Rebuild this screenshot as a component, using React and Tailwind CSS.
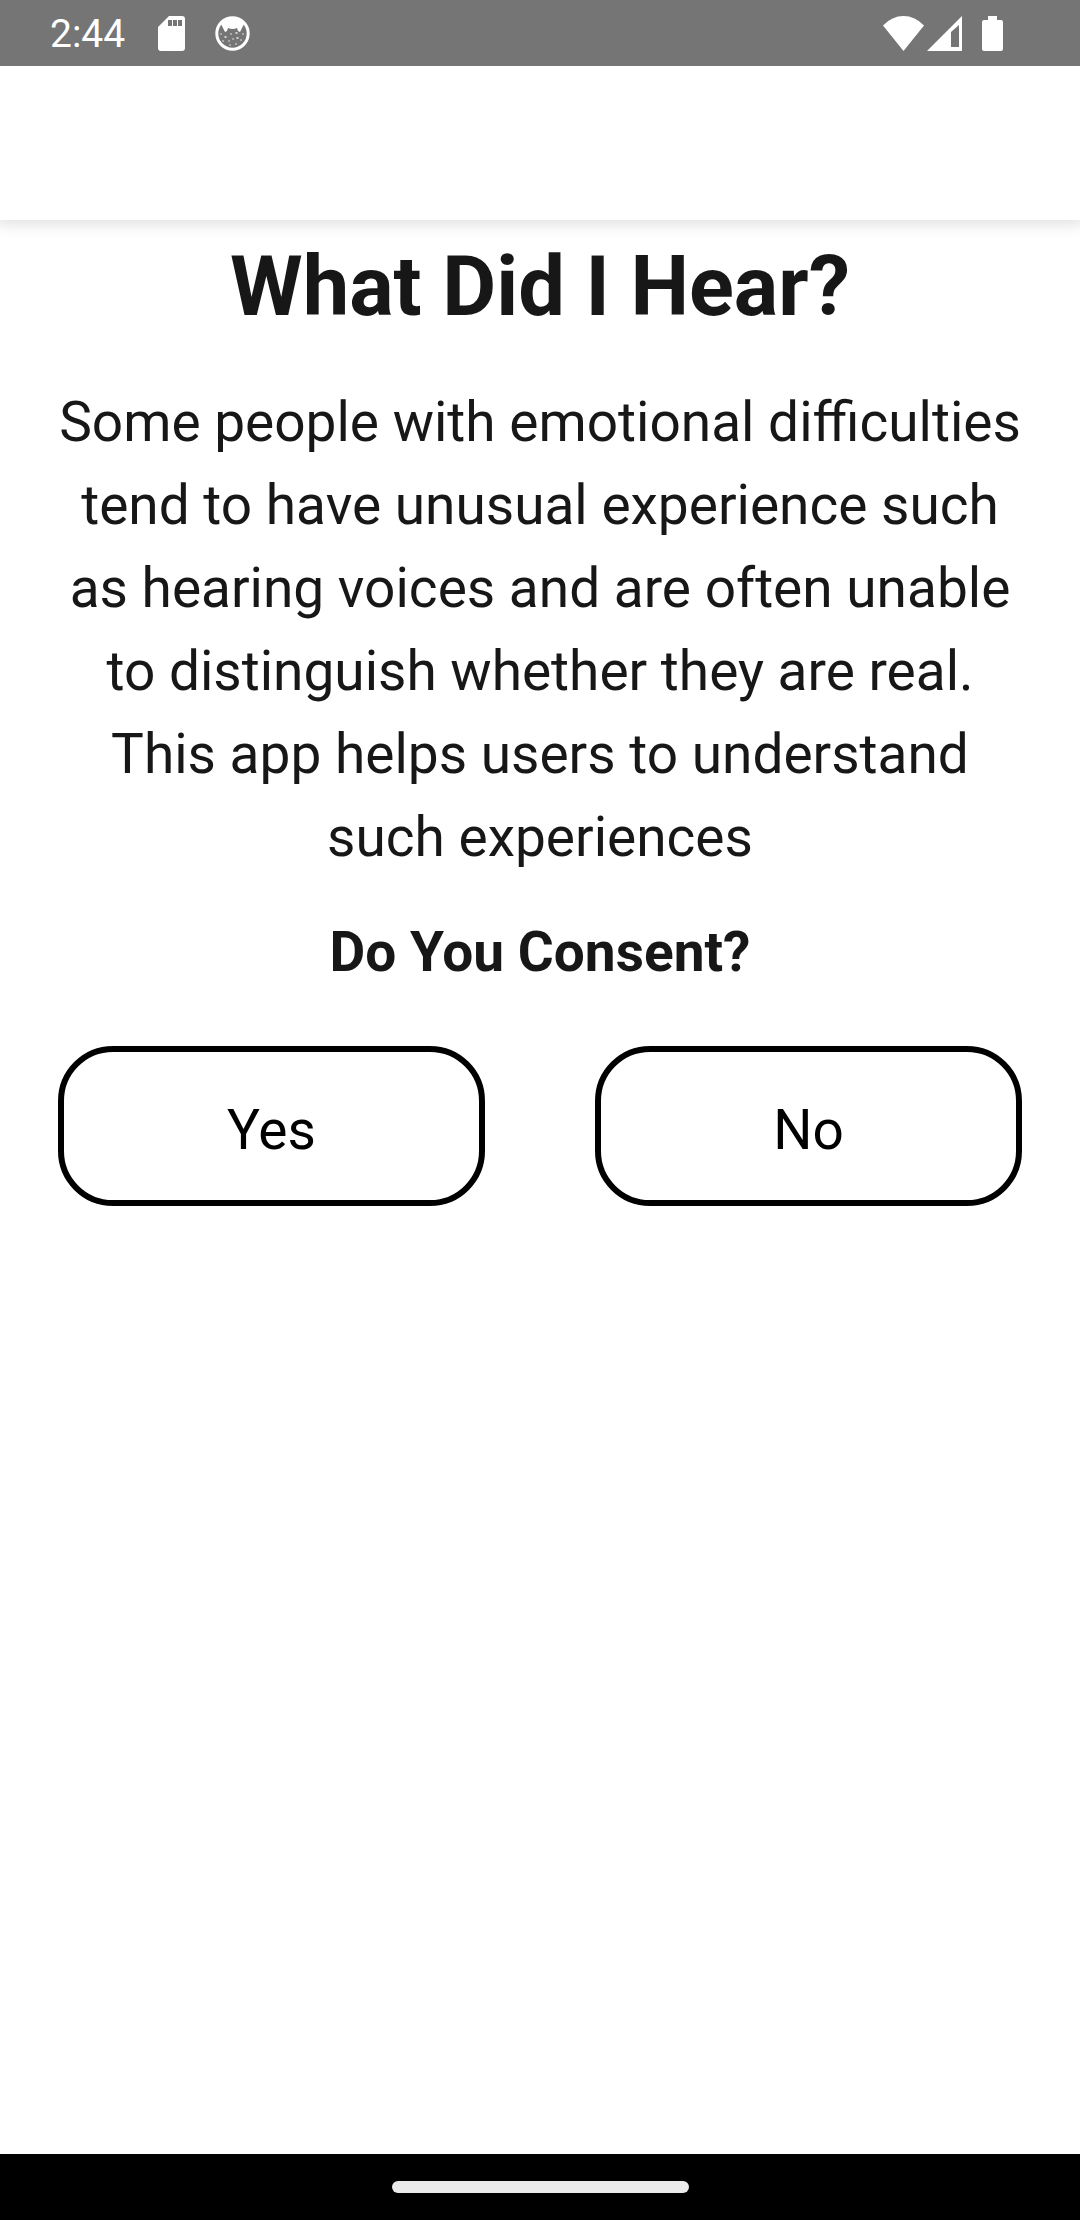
function StatusBar() {
  return (
    <div className="flex h-[66px] items-center bg-[#757575] pr-[77px] pl-[50px] text-white">
      <span className="w-[76px] pt-0.5 text-[39px] leading-none">2:44</span>
      <svg className="ml-8" width="27" height="35" viewBox="0 0 27 35" fill="currentColor">
        <path fillRule="evenodd" d="M11 0H24a3 3 0 0 1 3 3V32a3 3 0 0 1-3 3H3a3 3 0 0 1-3-3V11ZM10 4v6h4V4ZM15 4v6h4V4ZM20 4v6h4V4Z" />
      </svg>
      <svg className="ml-[30px]" width="35" height="35" viewBox="0 0 35 35" fill="none">
        <circle cx="17.5" cy="17.5" r="15.7" stroke="currentColor" strokeWidth="3" />
        <path fill="currentColor" d="M6 8 10 3Q17.500 0 25 3L29 8 27 12 25 16 23 15 22 12Q17.500 14 13 12L12 15 10 16 8 12Z" />
        <path stroke="currentColor" strokeWidth="1.500" strokeLinecap="round" opacity="0.85" d="M6 18h.1M10 21h1M16 18h.1M21 17h1M28 18h.1M8 25h.1M14 25h.1M18 23h.1M22 22h1M26 24h.1M15 29h.1M21 28h.1" />
      </svg>
      <span className="flex-1" />
      <svg width="41" height="35" viewBox="0 0 41 35" fill="currentColor">
        <path d="M0 9.500Q9 0 20.500 0T41 9.500L20.500 35Z" />
      </svg>
      <svg className="ml-[3px]" width="35" height="35" viewBox="0 0 35 35" fill="currentColor">
        <path fillRule="evenodd" d="M35 0V35H0ZM32 9 24 16V31H32Z" />
      </svg>
      <svg className="ml-5" width="21" height="35" viewBox="0 0 21 35" fill="currentColor">
        <path d="M6 0h9v4h4a2 2 0 0 1 2 2v27a2 2 0 0 1-2 2H2a2 2 0 0 1-2-2V6a2 2 0 0 1 2-2h4Z" />
      </svg>
    </div>
  );
}

function ChoiceButton({ children }) {
  return (
    <button className="h-[160px] rounded-[55px] border-6 border-black pt-2 text-[55px] text-black">
      {children}
    </button>
  );
}

export default function App() {
  return (
    <div className="flex min-h-screen flex-col bg-white font-['Roboto',sans-serif] text-[#171717]">
      <StatusBar />
      <header className="h-[154px] shadow-[0_0_14px_4px_rgba(0,0,0,0.13)] [clip-path:inset(0_0_-20px_0)]" />
      <main className="flex flex-col px-[58px] pt-[17px] text-center">
        <h1 className="text-[83px] leading-[100px] font-bold">What Did I Hear?</h1>
        <p className="mt-11 text-[55px] leading-[83px]">
          Some people with emotional difficulties tend to have unusual experience such as hearing voices and are often
          unable to distinguish whether they are real. This app helps users to understand such experiences
        </p>
        <h2 className="mt-8 text-[55px] leading-[83px] font-bold">Do You Consent?</h2>
        <div className="mt-[52px] grid grid-cols-2 gap-[110px]">
          <ChoiceButton>Yes</ChoiceButton>
          <ChoiceButton>No</ChoiceButton>
        </div>
      </main>
      <div className="mt-auto flex h-[66px] items-center justify-center bg-black">
        <div className="h-3 w-[297px] rounded-full bg-[#ebebeb]" />
      </div>
    </div>
  );
}
